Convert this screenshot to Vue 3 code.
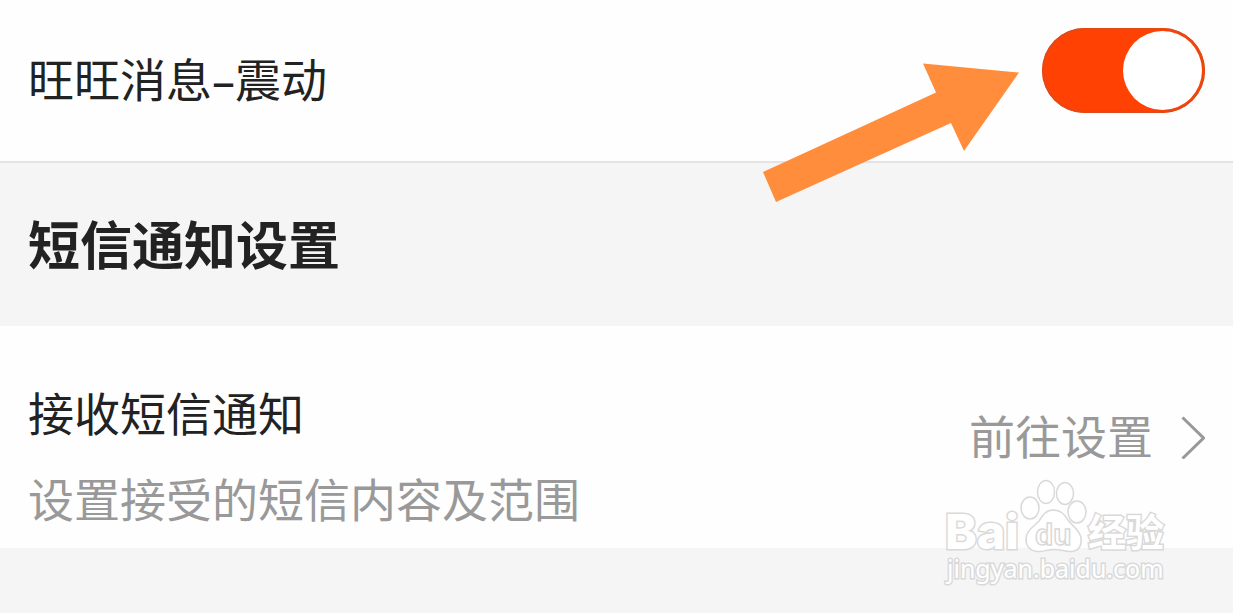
<script setup>
import { ref } from 'vue'

const vibrate = ref(true)
</script>

<template>
  <main class="page">
    <div class="row switch-row">
      <label class="label tall" for="vibrate">旺旺消息<span class="dash">–</span>震动</label>
      <input id="vibrate" v-model="vibrate" class="switch" type="checkbox" role="switch" />
    </div>

    <h2 class="section">短信通知设置</h2>

    <a class="row link-row" href="#sms">
      <span class="texts">
        <span class="label">接收短信通知</span>
        <span class="label muted">设置接受的短信内容及范围</span>
      </span>
      <span class="action">
        <span class="action-text">前往设置</span>
        <svg class="chevron" viewBox="0 0 24 44" aria-hidden="true">
          <path d="M1.5 2.5 L22.5 23 L1.5 43.5" />
        </svg>
      </span>
    </a>

    <svg class="arrow" viewBox="0 0 260 142" aria-hidden="true">
      <path d="M3 112 L176 32.5 L163 3.5 L259 12.5 L204 91 L191 63 L16 142 Z" />
    </svg>

    <svg class="watermark" viewBox="0 0 230 114" role="img" aria-label="Baidu 经验">
      <text class="brand" x="5" y="73">Bai</text>
      <g class="paw">
        <ellipse cx="90" cy="32" rx="9" ry="11" />
        <ellipse cx="106" cy="16" rx="8.5" ry="11.5" />
        <ellipse cx="125" cy="17.5" rx="8.5" ry="11" />
        <ellipse cx="137" cy="36" rx="9" ry="11" />
        <path d="M113 34 C106 34 103 39 99 45 C95 50 86 54 86 63 C86 71 91 75 97 75.5 C103 76 107 73.5 114 73.5 C121 73.5 126 76 132 75.5 C139 75 142 69 141 62 C140 54 132 50 128 44 C124 38 121 34 113 34 Z" />
      </g>
      <text class="du" x="95" y="69">du</text>
      <text class="cn" x="148" y="70">经验</text>
      <text class="site" x="7" y="102">jingyan.baidu.com</text>
    </svg>
  </main>
</template>

<style>
body {
  margin: 0;
  background: #f5f5f5;
}
</style>

<style scoped>
.page {
  position: relative;
  min-height: 100vh;
  overflow: hidden;
  background: #f5f5f5;
  color: #222;
  font-family: "Noto Sans CJK SC", sans-serif;
  font-size: 46px;
}

.row {
  display: flex;
  justify-content: space-between;
  padding: 0 28px;
  background: #fefefe;
  color: inherit;
  text-decoration: none;
}

.switch-row {
  align-items: flex-start;
  padding-top: 28px;
  padding-bottom: 35px;
  border-bottom: 2px solid #e3e3e3;
}

.label {
  line-height: 86px;
}

.tall {
  line-height: 98px;
}

.dash {
  font-family: "Noto Sans", sans-serif;
  line-height: 1;
}

.switch {
  appearance: none;
  box-sizing: border-box;
  display: flex;
  flex: none;
  width: 163px;
  height: 85px;
  margin: 0;
  padding: 3px;
  border-radius: 43px;
  background: #ccc;
}

.switch::before {
  content: "";
  width: 79px;
  height: 79px;
  border-radius: 50%;
  background: #fff;
}

.switch:checked {
  justify-content: flex-end;
  background: #ff4203;
  box-shadow: inset 0 0 0 2px #e04a18;
}

.section {
  margin: 0;
  padding: 0 28px 4px;
  font-size: 52px;
  font-weight: 700;
  line-height: 159px;
}

.link-row {
  align-items: center;
}

.texts {
  display: flex;
  flex-direction: column;
  padding: 42px 0 8px;
}

.muted,
.action-text {
  color: #999;
}

.action {
  display: flex;
  align-items: center;
  gap: 28px;
}

.action-text {
  padding-bottom: 6px;
}

.chevron {
  width: 24px;
  height: 44px;
  fill: none;
  stroke: #999;
  stroke-width: 3;
}

.arrow {
  position: absolute;
  top: 60px;
  right: 213px;
  width: 260px;
  height: 142px;
  fill: #ff8d3c;
}

.watermark {
  position: absolute;
  top: 476px;
  right: 63px;
  width: 230px;
  height: 114px;
  fill: #fff;
  stroke: #d9d9d9;
  stroke-width: 1.5;
  overflow: visible;
}

.brand,
.cn,
.site {
  paint-order: stroke;
  stroke-width: 3px;
}

.brand {
  font: 800 48px Inter, sans-serif;
}

.du {
  font: 700 30px "Liberation Sans", sans-serif;
}

.cn {
  font: 700 38px "Noto Sans CJK SC", sans-serif;
}

.site {
  font: 400 25px "Noto Sans", sans-serif;
}
</style>
